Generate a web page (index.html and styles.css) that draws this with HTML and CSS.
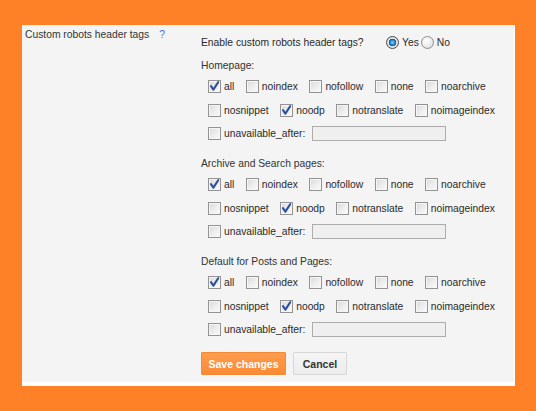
FILE: index.html
```html
<!DOCTYPE html>
<html>
<head>
<meta charset="utf-8">
<link rel="stylesheet" href="styles.css">
</head>
<body>
<div class="panel">
  <div class="setting">
    <div class="setting-name">Custom robots header tags<span class="help">?</span></div>
    <div class="setting-body">
      <div class="enable">
        <span class="enable-label">Enable custom robots header tags?</span>
        <span class="radio on"></span><span class="rlabel">Yes</span>
        <span class="radio"></span><span class="rlabel">No</span>
      </div>

      <div class="section">
        <div class="section-title">Homepage:</div>
        <div class="row">
          <span class="item"><span class="cb on"><svg viewBox="0 0 13 13"><path d="M3 6.2 L5.4 9.6 L10.2 2.2"/></svg></span>all</span>
          <span class="item"><span class="cb"></span>noindex</span>
          <span class="item"><span class="cb"></span>nofollow</span>
          <span class="item"><span class="cb"></span>none</span>
          <span class="item"><span class="cb"></span>noarchive</span>
        </div>
        <div class="row">
          <span class="item"><span class="cb"></span>nosnippet</span>
          <span class="item"><span class="cb on"><svg viewBox="0 0 13 13"><path d="M3 6.2 L5.4 9.6 L10.2 2.2"/></svg></span>noodp</span>
          <span class="item"><span class="cb"></span>notranslate</span>
          <span class="item"><span class="cb"></span>noimageindex</span>
        </div>
        <div class="row">
          <span class="item before-date"><span class="cb"></span>unavailable_after:</span><span class="date"></span>
        </div>
      </div>

      <div class="section">
        <div class="section-title">Archive and Search pages:</div>
        <div class="row">
          <span class="item"><span class="cb on"><svg viewBox="0 0 13 13"><path d="M3 6.2 L5.4 9.6 L10.2 2.2"/></svg></span>all</span>
          <span class="item"><span class="cb"></span>noindex</span>
          <span class="item"><span class="cb"></span>nofollow</span>
          <span class="item"><span class="cb"></span>none</span>
          <span class="item"><span class="cb"></span>noarchive</span>
        </div>
        <div class="row">
          <span class="item"><span class="cb"></span>nosnippet</span>
          <span class="item"><span class="cb on"><svg viewBox="0 0 13 13"><path d="M3 6.2 L5.4 9.6 L10.2 2.2"/></svg></span>noodp</span>
          <span class="item"><span class="cb"></span>notranslate</span>
          <span class="item"><span class="cb"></span>noimageindex</span>
        </div>
        <div class="row">
          <span class="item before-date"><span class="cb"></span>unavailable_after:</span><span class="date"></span>
        </div>
      </div>

      <div class="section">
        <div class="section-title">Default for Posts and Pages:</div>
        <div class="row">
          <span class="item"><span class="cb on"><svg viewBox="0 0 13 13"><path d="M3 6.2 L5.4 9.6 L10.2 2.2"/></svg></span>all</span>
          <span class="item"><span class="cb"></span>noindex</span>
          <span class="item"><span class="cb"></span>nofollow</span>
          <span class="item"><span class="cb"></span>none</span>
          <span class="item"><span class="cb"></span>noarchive</span>
        </div>
        <div class="row">
          <span class="item"><span class="cb"></span>nosnippet</span>
          <span class="item"><span class="cb on"><svg viewBox="0 0 13 13"><path d="M3 6.2 L5.4 9.6 L10.2 2.2"/></svg></span>noodp</span>
          <span class="item"><span class="cb"></span>notranslate</span>
          <span class="item"><span class="cb"></span>noimageindex</span>
        </div>
        <div class="row">
          <span class="item before-date"><span class="cb"></span>unavailable_after:</span><span class="date"></span>
        </div>
      </div>

      <div class="actions">
        <button class="btn save">Save changes</button>
        <button class="btn cancel">Cancel</button>
      </div>
    </div>
  </div>
</div>
</body>
</html>
```

FILE: styles.css
```css
html, body {
  margin: 0;
  padding: 0;
}
body {
  background: #fe8127;
  width: 536px;
  height: 411px;
  overflow: hidden;
  font-family: "Liberation Sans", Arial, sans-serif;
  font-size: 10.3px;
  color: #2a2a2a;
}
.panel {
  margin: 25px 0 0 22px;
  width: 492px;
  background: #fff;
  padding: 0 1px 4px 0;
}
.setting {
  display: flex;
  background: #f4f4f4;
}
.setting-name {
  width: 176px;
  padding: 3px 0 0 3px;
  line-height: 14px;
  color: #333;
  white-space: nowrap;
}
.help {
  color: #3b74d6;
  margin-left: 10px;
}
.setting-body {
  flex: 1;
  padding: 9px 0 7px 0;
}
.enable {
  display: flex;
  align-items: center;
  height: 16px;
  margin-bottom: 8px;
}
.enable-label {
  width: 185px;
}
.radio {
  width: 11px;
  height: 11px;
  border: 1px solid #8c8c8c;
  border-radius: 50%;
  background: radial-gradient(circle at 40% 35%, #ffffff 0%, #e9e9e9 60%, #cfcfcf 100%);
  margin-right: 3px;
}
.radio.on {
  border-color: #4a4a4a;
  background: radial-gradient(circle at 50% 50%, #7fd0ff 0%, #1f86d6 32%, #0d4f8e 45%, #e8e8e8 52%, #cfcfcf 100%);
}
.rlabel {
  margin-right: 2px;
}
.section {
  margin-bottom: 10.5px;
}
.section-title {
  line-height: 16px;
  margin-bottom: 1px;
  color: #333;
}
.row {
  display: flex;
  align-items: center;
  height: 23.5px;
  padding-left: 7px;
  white-space: nowrap;
}
.item {
  display: flex;
  align-items: center;
  margin-right: 11.5px;
}
.row .item:last-child {
  margin-right: 0;
}
.row .item.before-date {
  margin-right: 7px;
}
.cb {
  box-sizing: border-box;
  width: 13px;
  height: 13px;
  border: 1px solid #939393;
  background: linear-gradient(135deg, #d9d9d9 0%, #eeeeee 55%, #fbfbfb 100%);
  box-shadow: inset 0 0 0 1px #f6f6f6;
  margin-right: 3px;
  position: relative;
}
.cb svg {
  position: absolute;
  left: -1px;
  top: -1px;
  width: 13px;
  height: 13px;
}
.cb svg path {
  fill: none;
  stroke: #2c4f9e;
  stroke-width: 2.1;
  stroke-linecap: round;
  stroke-linejoin: round;
}
.date {
  flex: none;
  width: 134px;
  height: 15px;
  box-sizing: border-box;
  border: 1px solid #acacac;
  background: #efefef;
}
.actions {
  display: flex;
  gap: 7px;
  margin-top: 1px;
}
.btn {
  box-sizing: border-box;
  height: 23px;
  font-family: "Liberation Sans", Arial, sans-serif;
  font-weight: bold;
  font-size: 10.5px;
  border-radius: 1px;
  padding: 0;
}
.save {
  width: 85px;
  color: #fff;
  border: 1px solid #f38a35;
  background: linear-gradient(#fe9c4e, #f98b33);
}
.cancel {
  width: 54px;
  color: #333;
  border: 1px solid #d8d8d8;
  background: linear-gradient(#f5f5f5, #ececec);
}
```
